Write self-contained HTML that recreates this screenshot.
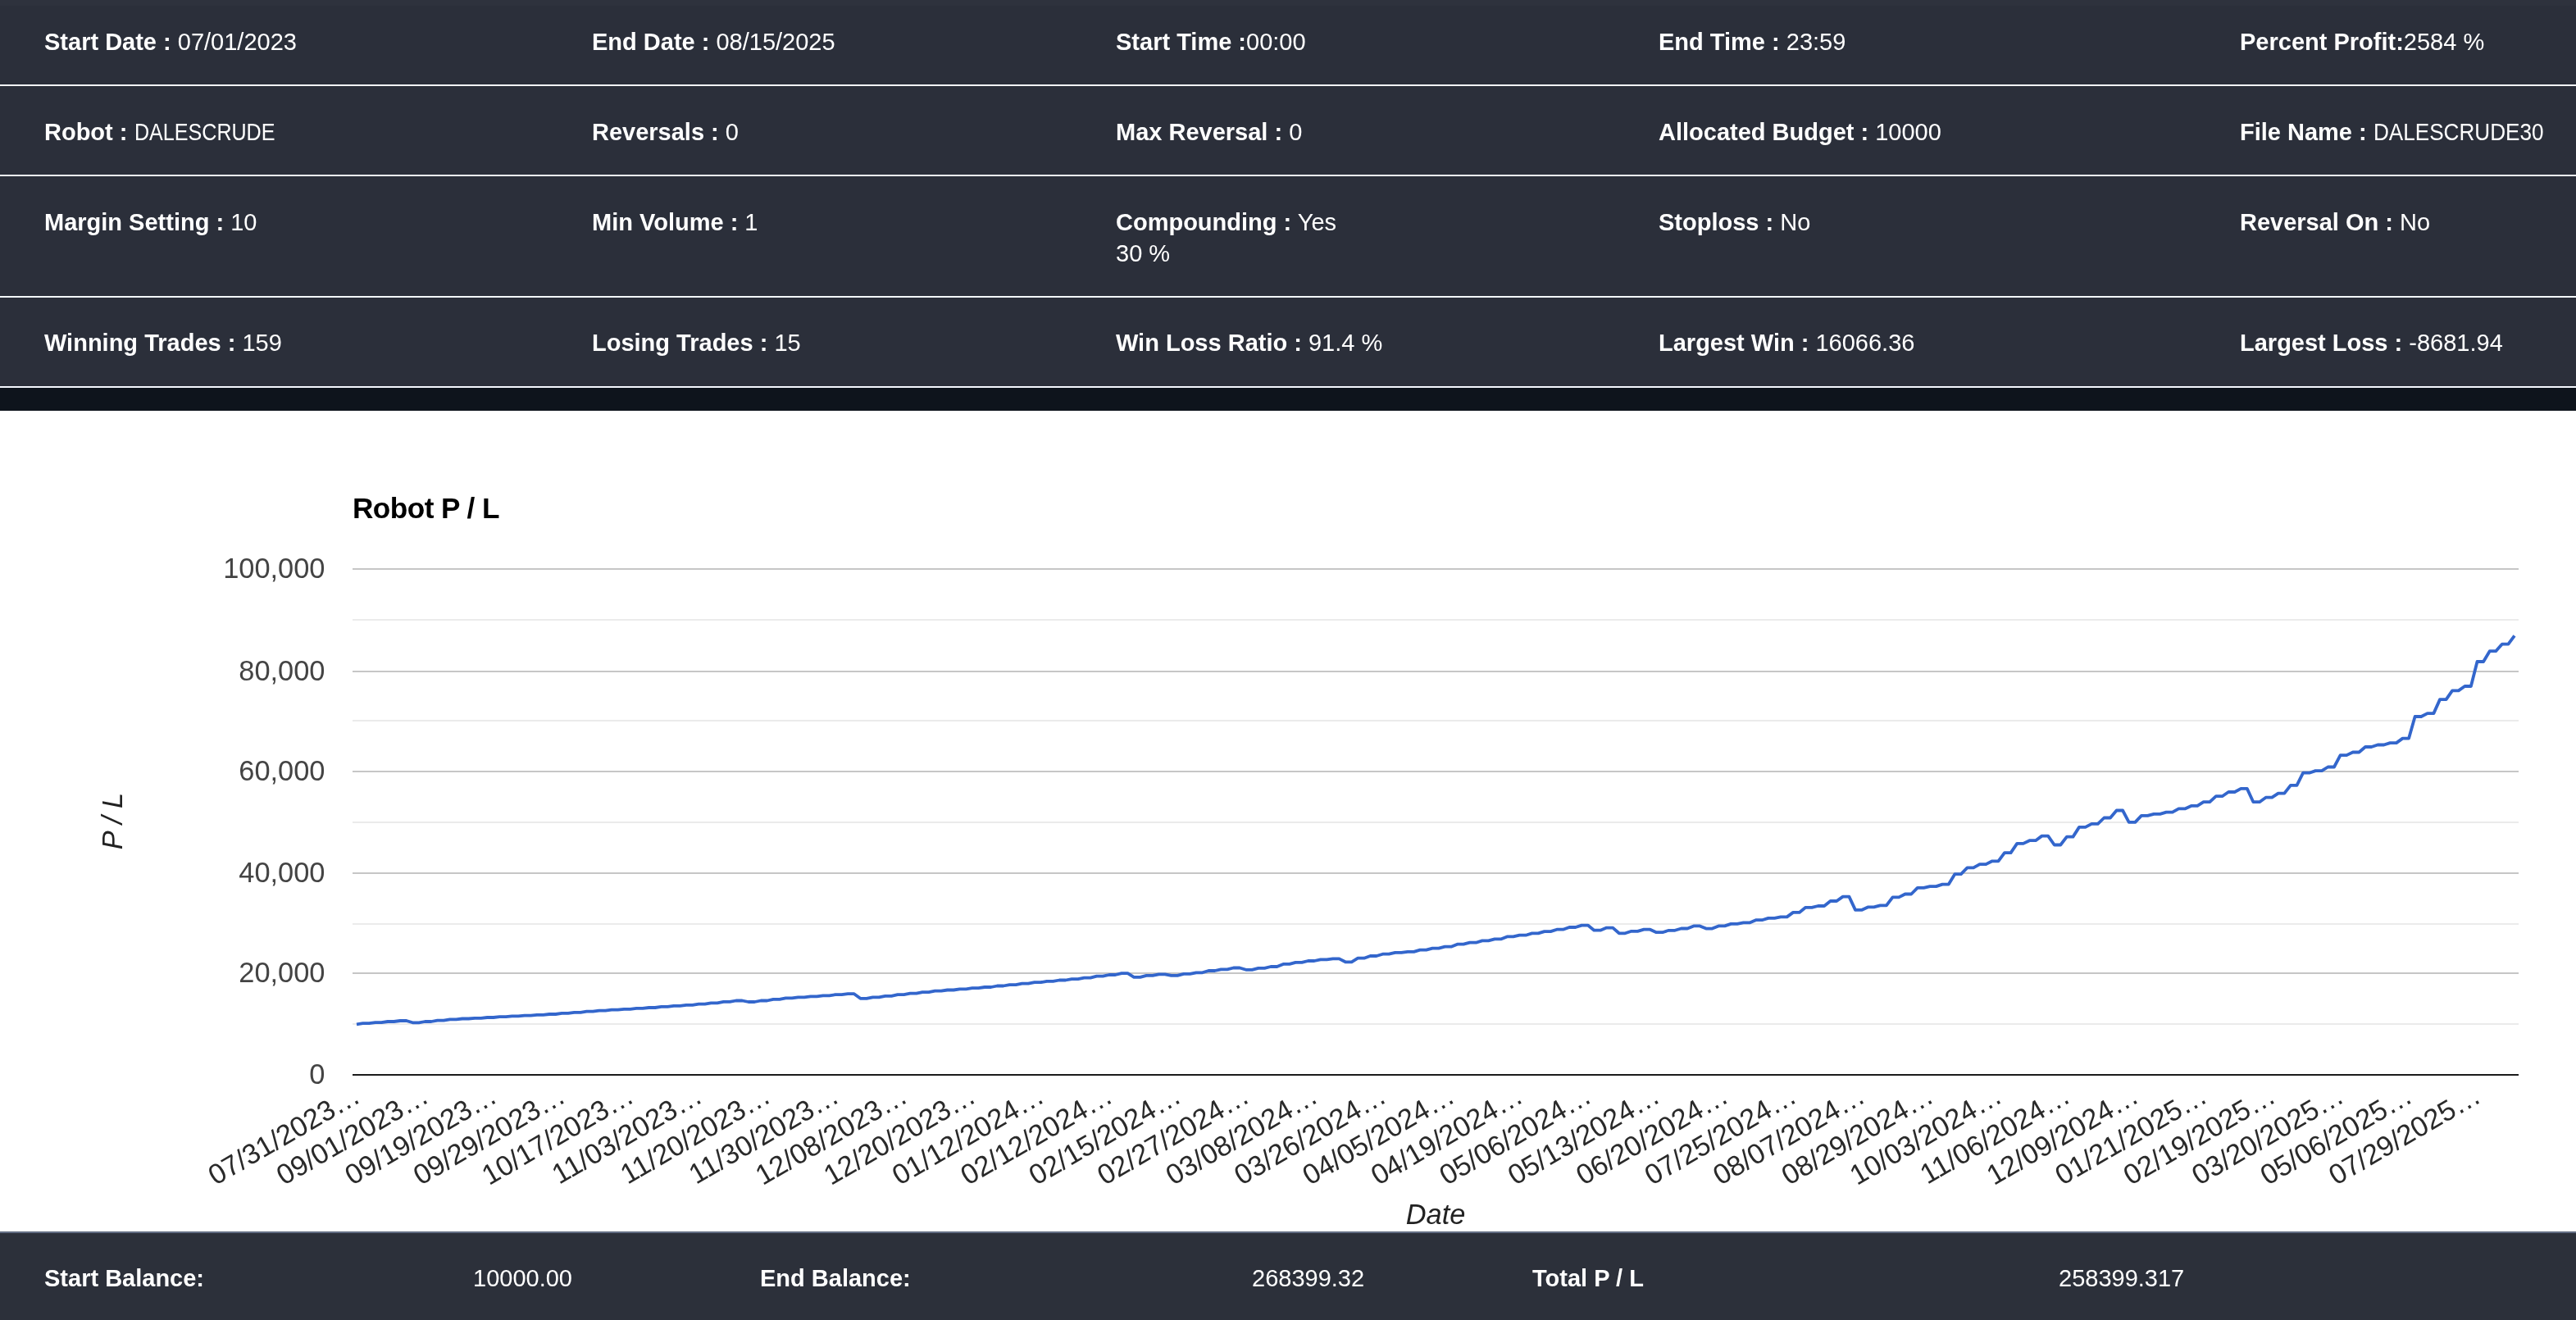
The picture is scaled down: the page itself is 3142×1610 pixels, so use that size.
<!DOCTYPE html>
<html><head><meta charset="utf-8">
<style>
html,body{margin:0;padding:0;width:3142px;height:1610px;overflow:hidden;background:#fff;font-family:"Liberation Sans",sans-serif;}
#hdr{position:absolute;left:0;top:0;width:3142px;height:473px;background:#2b2f3a;}
#hdrtop{position:absolute;left:0;top:0;width:3142px;height:7px;background:#2e323d;}
.hl{position:absolute;left:0;width:3142px;height:2px;background:#f4f8fd;}
#strip{position:absolute;left:0;top:473px;width:3142px;height:28px;background:#0e141c;}
.t{position:absolute;white-space:nowrap;color:#fff;font-size:29px;line-height:37.5px;}
.t b{font-weight:bold;}
#ftr{position:absolute;left:0;top:1502px;width:3142px;height:108px;background:#2c303a;}
#ftrb1{position:absolute;left:0;top:1502px;width:3142px;height:1px;background:#5a6479;}
#ftrb2{position:absolute;left:0;top:1503px;width:3142px;height:1px;background:#66728a;}
svg{position:absolute;left:0;top:0;}
.t,svg{will-change:transform;}
</style></head><body>
<div id="hdr"></div>
<div id="hdrtop"></div>
<div class="hl" style="top:103px"></div>
<div class="hl" style="top:213px"></div>
<div class="hl" style="top:361px"></div>
<div class="hl" style="top:471px"></div>
<div id="strip"></div>

<!-- header text -->
<div class="t" style="left:54px;top:33px"><b>Start Date :</b> 07/01/2023</div>
<div class="t" style="left:722px;top:33px"><b>End Date :</b> 08/15/2025</div>
<div class="t" style="left:1361px;top:33px"><b>Start Time :</b>00:00</div>
<div class="t" style="left:2023px;top:33px"><b>End Time :</b> 23:59</div>
<div class="t" style="left:2732px;top:33px"><b>Percent Profit:</b>2584 %</div>

<div class="t" style="left:54px;top:143px"><b>Robot :</b> <span style="display:inline-block;transform:scaleX(0.865);transform-origin:0 0">DALESCRUDE</span></div>
<div class="t" style="left:722px;top:143px"><b>Reversals :</b> 0</div>
<div class="t" style="left:1361px;top:143px"><b>Max Reversal :</b> 0</div>
<div class="t" style="left:2023px;top:143px"><b>Allocated Budget :</b> 10000</div>
<div class="t" style="left:2732px;top:143px"><b>File Name :</b> <span style="display:inline-block;transform:scaleX(0.9);transform-origin:0 0">DALESCRUDE30</span></div>

<div class="t" style="left:54px;top:253px"><b>Margin Setting :</b> 10</div>
<div class="t" style="left:722px;top:253px"><b>Min Volume :</b> 1</div>
<div class="t" style="left:1361px;top:253px"><b>Compounding :</b> Yes<br>30 %</div>
<div class="t" style="left:2023px;top:253px"><b>Stoploss :</b> No</div>
<div class="t" style="left:2732px;top:253px"><b>Reversal On :</b> No</div>

<div class="t" style="left:54px;top:400px"><b>Winning Trades :</b> 159</div>
<div class="t" style="left:722px;top:400px"><b>Losing Trades :</b> 15</div>
<div class="t" style="left:1361px;top:400px"><b>Win Loss Ratio :</b> 91.4 %</div>
<div class="t" style="left:2023px;top:400px"><b>Largest Win :</b> 16066.36</div>
<div class="t" style="left:2732px;top:400px"><b>Largest Loss :</b> -8681.94</div>

<!-- CHART -->
<svg id="chart" width="3142" height="1610" viewBox="0 0 3142 1610" font-family="Liberation Sans">
<text x="430" y="632" font-size="35.2" font-weight="bold" fill="#000" letter-spacing="-0.55">Robot P / L</text>
<g id="grid" shape-rendering="crispEdges">
<rect x="430" y="755" width="2642" height="2" fill="#ebebeb"/>
<rect x="430" y="878" width="2642" height="2" fill="#ebebeb"/>
<rect x="430" y="1002" width="2642" height="2" fill="#ebebeb"/>
<rect x="430" y="1126" width="2642" height="2" fill="#ebebeb"/>
<rect x="430" y="1248" width="2642" height="2" fill="#ebebeb"/>
<rect x="430" y="693" width="2642" height="2" fill="#c6c6c6"/>
<rect x="430" y="818" width="2642" height="2" fill="#c6c6c6"/>
<rect x="430" y="940" width="2642" height="2" fill="#c6c6c6"/>
<rect x="430" y="1064" width="2642" height="2" fill="#c6c6c6"/>
<rect x="430" y="1186" width="2642" height="2" fill="#c6c6c6"/>
</g>
<g id="ylab" font-size="34.4" fill="#444" text-anchor="end">
<text x="396.5" y="705">100,000</text>
<text x="396.5" y="830">80,000</text>
<text x="396.5" y="952">60,000</text>
<text x="396.5" y="1076">40,000</text>
<text x="396.5" y="1198">20,000</text>
<text x="396.5" y="1322">0</text>
</g>
<text transform="translate(149,1001.5) rotate(-90)" font-size="34.4" font-style="italic" fill="#222" text-anchor="middle">P / L</text>
<text x="1751" y="1493" font-size="34.4" font-style="italic" fill="#222" text-anchor="middle">Date</text>
<g id="line"><path d="M435.0,1249.3 L442.6,1248.2 L450.2,1248.2 L457.8,1247.2 L465.3,1247.2 L472.9,1246.0 L480.5,1246.0 L488.1,1245.0 L495.7,1245.0 L503.3,1247.3 L510.9,1247.3 L518.4,1246.0 L526.0,1246.0 L533.6,1244.6 L541.2,1244.6 L548.8,1243.3 L556.4,1243.3 L563.9,1242.5 L571.5,1242.5 L579.1,1241.8 L586.7,1241.8 L594.3,1241.0 L601.9,1241.0 L609.5,1240.2 L617.0,1240.2 L624.6,1239.4 L632.2,1239.4 L639.8,1238.6 L647.4,1238.6 L655.0,1237.8 L662.5,1237.8 L670.1,1237.0 L677.7,1237.0 L685.3,1235.9 L692.9,1235.9 L700.5,1234.8 L708.1,1234.8 L715.6,1233.7 L723.2,1233.7 L730.8,1232.6 L738.4,1232.6 L746.0,1231.7 L753.6,1231.7 L761.2,1230.8 L768.7,1230.8 L776.3,1229.9 L783.9,1229.9 L791.5,1229.0 L799.1,1229.0 L806.7,1227.9 L814.2,1227.9 L821.8,1226.8 L829.4,1226.8 L837.0,1225.8 L844.6,1225.8 L852.2,1224.7 L859.8,1224.7 L867.3,1223.3 L874.9,1223.3 L882.5,1221.9 L890.1,1221.9 L897.7,1220.5 L905.3,1220.5 L912.9,1222.0 L920.4,1222.0 L928.0,1220.5 L935.6,1220.5 L943.2,1218.9 L950.8,1218.9 L958.4,1217.4 L966.0,1217.4 L973.5,1216.4 L981.1,1216.4 L988.7,1215.3 L996.3,1215.3 L1003.9,1214.3 L1011.5,1214.3 L1019.0,1213.2 L1026.6,1213.2 L1034.2,1212.2 L1041.8,1212.2 L1049.4,1217.8 L1057.0,1217.8 L1064.6,1216.3 L1072.1,1216.3 L1079.7,1214.8 L1087.3,1214.8 L1094.9,1213.2 L1102.5,1213.2 L1110.1,1211.7 L1117.7,1211.7 L1125.2,1210.2 L1132.8,1210.2 L1140.4,1208.7 L1148.0,1208.7 L1155.6,1207.5 L1163.2,1207.5 L1170.7,1206.3 L1178.3,1206.3 L1185.9,1205.2 L1193.5,1205.2 L1201.1,1204.0 L1208.7,1204.0 L1216.3,1202.5 L1223.8,1202.5 L1231.4,1201.1 L1239.0,1201.1 L1246.6,1199.7 L1254.2,1199.7 L1261.8,1198.2 L1269.3,1198.2 L1276.9,1196.8 L1284.5,1196.8 L1292.1,1195.5 L1299.7,1195.5 L1307.3,1194.1 L1314.9,1194.1 L1322.4,1192.7 L1330.0,1192.7 L1337.6,1190.7 L1345.2,1190.7 L1352.8,1189.0 L1360.4,1189.0 L1368.0,1187.2 L1375.5,1187.2 L1383.1,1191.8 L1390.7,1191.8 L1398.3,1189.8 L1405.9,1189.8 L1413.5,1188.3 L1421.0,1188.3 L1428.6,1189.8 L1436.2,1189.8 L1443.8,1187.9 L1451.4,1187.9 L1459.0,1186.3 L1466.6,1186.3 L1474.1,1184.0 L1481.7,1184.0 L1489.3,1182.3 L1496.9,1182.3 L1504.5,1180.5 L1512.1,1180.5 L1519.7,1182.8 L1527.2,1182.8 L1534.8,1180.9 L1542.4,1180.9 L1550.0,1179.0 L1557.6,1179.0 L1565.2,1175.9 L1572.8,1175.9 L1580.3,1173.9 L1587.9,1173.9 L1595.5,1172.0 L1603.1,1172.0 L1610.7,1170.4 L1618.3,1170.4 L1625.8,1169.4 L1633.4,1169.4 L1641.0,1173.3 L1648.6,1173.3 L1656.2,1168.7 L1663.8,1168.7 L1671.4,1166.0 L1678.9,1166.0 L1686.5,1163.7 L1694.1,1163.7 L1701.7,1161.9 L1709.3,1161.9 L1716.9,1160.8 L1724.5,1160.8 L1732.0,1158.7 L1739.6,1158.7 L1747.2,1156.7 L1754.8,1156.7 L1762.4,1154.7 L1770.0,1154.7 L1777.5,1151.7 L1785.1,1151.7 L1792.7,1149.7 L1800.3,1149.7 L1807.9,1147.4 L1815.5,1147.4 L1823.1,1145.4 L1830.6,1145.4 L1838.2,1142.4 L1845.8,1142.4 L1853.4,1140.7 L1861.0,1140.7 L1868.6,1138.4 L1876.2,1138.4 L1883.7,1136.1 L1891.3,1136.1 L1898.9,1133.7 L1906.5,1133.7 L1914.1,1131.0 L1921.7,1131.0 L1929.2,1128.6 L1936.8,1128.6 L1944.4,1134.7 L1952.0,1134.7 L1959.6,1131.6 L1967.2,1131.6 L1974.8,1138.3 L1982.3,1138.3 L1989.9,1135.8 L1997.5,1135.8 L2005.1,1133.7 L2012.7,1133.7 L2020.3,1137.2 L2027.8,1137.2 L2035.4,1134.8 L2043.0,1134.8 L2050.6,1132.5 L2058.2,1132.5 L2065.8,1129.4 L2073.4,1129.4 L2080.9,1132.6 L2088.5,1132.6 L2096.1,1129.4 L2103.7,1129.4 L2111.3,1126.9 L2118.9,1126.9 L2126.5,1125.4 L2134.0,1125.4 L2141.6,1122.2 L2149.2,1122.2 L2156.8,1119.9 L2164.4,1119.9 L2172.0,1118.4 L2179.6,1118.4 L2187.1,1112.9 L2194.7,1112.9 L2202.3,1106.8 L2209.9,1106.8 L2217.5,1105.0 L2225.1,1105.0 L2232.6,1099.0 L2240.2,1099.0 L2247.8,1093.6 L2255.4,1093.6 L2263.0,1109.9 L2270.6,1109.9 L2278.2,1106.4 L2285.7,1106.4 L2293.3,1104.4 L2300.9,1104.4 L2308.5,1094.4 L2316.1,1094.4 L2323.7,1090.5 L2331.2,1090.5 L2338.8,1082.9 L2346.4,1082.9 L2354.0,1081.1 L2361.6,1081.1 L2369.2,1078.6 L2376.8,1078.6 L2384.3,1066.2 L2391.9,1066.2 L2399.5,1058.4 L2407.1,1058.4 L2414.7,1054.1 L2422.3,1054.1 L2429.9,1050.3 L2437.4,1050.3 L2445.0,1040.1 L2452.6,1040.1 L2460.2,1028.9 L2467.8,1028.9 L2475.4,1025.2 L2482.9,1025.2 L2490.5,1019.6 L2498.1,1019.6 L2505.7,1030.5 L2513.3,1030.5 L2520.9,1020.6 L2528.5,1020.6 L2536.0,1008.9 L2543.6,1008.9 L2551.2,1004.8 L2558.8,1004.8 L2566.4,997.5 L2574.0,997.5 L2581.6,988.5 L2589.1,988.5 L2596.7,1002.9 L2604.3,1002.9 L2611.9,994.9 L2619.5,994.9 L2627.1,992.8 L2634.7,992.8 L2642.2,990.7 L2649.8,990.7 L2657.4,986.4 L2665.0,986.4 L2672.6,982.9 L2680.2,982.9 L2687.7,978.2 L2695.3,978.2 L2702.9,971.2 L2710.5,971.2 L2718.1,966.0 L2725.7,966.0 L2733.3,961.9 L2740.8,961.9 L2748.4,978.2 L2756.0,978.2 L2763.6,972.7 L2771.2,972.7 L2778.8,967.7 L2786.3,967.7 L2793.9,957.8 L2801.5,957.8 L2809.1,942.7 L2816.7,942.7 L2824.3,940.1 L2831.9,940.1 L2839.4,935.5 L2847.0,935.5 L2854.6,921.1 L2862.2,921.1 L2869.8,917.5 L2877.4,917.5 L2885.0,911.0 L2892.5,911.0 L2900.1,908.5 L2907.7,908.5 L2915.3,906.1 L2922.9,906.1 L2930.5,900.6 L2938.1,900.6 L2945.6,874.0 L2953.2,874.0 L2960.8,870.1 L2968.4,870.1 L2976.0,853.1 L2983.6,853.1 L2991.1,842.4 L2998.7,842.4 L3006.3,837.0 L3013.9,837.0 L3021.5,807.0 L3029.1,807.0 L3036.7,794.2 L3044.2,794.2 L3051.8,785.7 L3059.4,785.7 L3067.0,775.3" fill="none" stroke="#3366cc" stroke-width="3.8" stroke-linejoin="round"/></g>
<rect x="430" y="1310" width="2642" height="2" fill="#1b1b1b" shape-rendering="crispEdges"/>
<g id="xlab" font-size="34.4" fill="#2a2a2a" text-anchor="end"><text transform="translate(441.50,1343.0) rotate(-30)">07/31/2023…</text>
<text transform="translate(524.93,1343.0) rotate(-30)">09/01/2023…</text>
<text transform="translate(608.37,1343.0) rotate(-30)">09/19/2023…</text>
<text transform="translate(691.81,1343.0) rotate(-30)">09/29/2023…</text>
<text transform="translate(775.24,1343.0) rotate(-30)">10/17/2023…</text>
<text transform="translate(858.67,1343.0) rotate(-30)">11/03/2023…</text>
<text transform="translate(942.11,1343.0) rotate(-30)">11/20/2023…</text>
<text transform="translate(1025.55,1343.0) rotate(-30)">11/30/2023…</text>
<text transform="translate(1108.98,1343.0) rotate(-30)">12/08/2023…</text>
<text transform="translate(1192.41,1343.0) rotate(-30)">12/20/2023…</text>
<text transform="translate(1275.85,1343.0) rotate(-30)">01/12/2024…</text>
<text transform="translate(1359.28,1343.0) rotate(-30)">02/12/2024…</text>
<text transform="translate(1442.72,1343.0) rotate(-30)">02/15/2024…</text>
<text transform="translate(1526.15,1343.0) rotate(-30)">02/27/2024…</text>
<text transform="translate(1609.59,1343.0) rotate(-30)">03/08/2024…</text>
<text transform="translate(1693.03,1343.0) rotate(-30)">03/26/2024…</text>
<text transform="translate(1776.46,1343.0) rotate(-30)">04/05/2024…</text>
<text transform="translate(1859.89,1343.0) rotate(-30)">04/19/2024…</text>
<text transform="translate(1943.33,1343.0) rotate(-30)">05/06/2024…</text>
<text transform="translate(2026.77,1343.0) rotate(-30)">05/13/2024…</text>
<text transform="translate(2110.20,1343.0) rotate(-30)">06/20/2024…</text>
<text transform="translate(2193.64,1343.0) rotate(-30)">07/25/2024…</text>
<text transform="translate(2277.07,1343.0) rotate(-30)">08/07/2024…</text>
<text transform="translate(2360.51,1343.0) rotate(-30)">08/29/2024…</text>
<text transform="translate(2443.94,1343.0) rotate(-30)">10/03/2024…</text>
<text transform="translate(2527.38,1343.0) rotate(-30)">11/06/2024…</text>
<text transform="translate(2610.81,1343.0) rotate(-30)">12/09/2024…</text>
<text transform="translate(2694.24,1343.0) rotate(-30)">01/21/2025…</text>
<text transform="translate(2777.68,1343.0) rotate(-30)">02/19/2025…</text>
<text transform="translate(2861.11,1343.0) rotate(-30)">03/20/2025…</text>
<text transform="translate(2944.55,1343.0) rotate(-30)">05/06/2025…</text>
<text transform="translate(3027.99,1343.0) rotate(-30)">07/29/2025…</text></g>
</svg>

<div id="ftr"></div>
<div id="ftrb1"></div>
<div id="ftrb2"></div>
<div class="t" style="left:54px;top:1541px"><b>Start Balance:</b></div>
<div class="t" style="left:577px;top:1541px">10000.00</div>
<div class="t" style="left:927px;top:1541px"><b>End Balance:</b></div>
<div class="t" style="left:1527px;top:1541px">268399.32</div>
<div class="t" style="left:1869px;top:1541px"><b>Total P / L</b></div>
<div class="t" style="left:2511px;top:1541px">258399.317</div>
</body></html>
